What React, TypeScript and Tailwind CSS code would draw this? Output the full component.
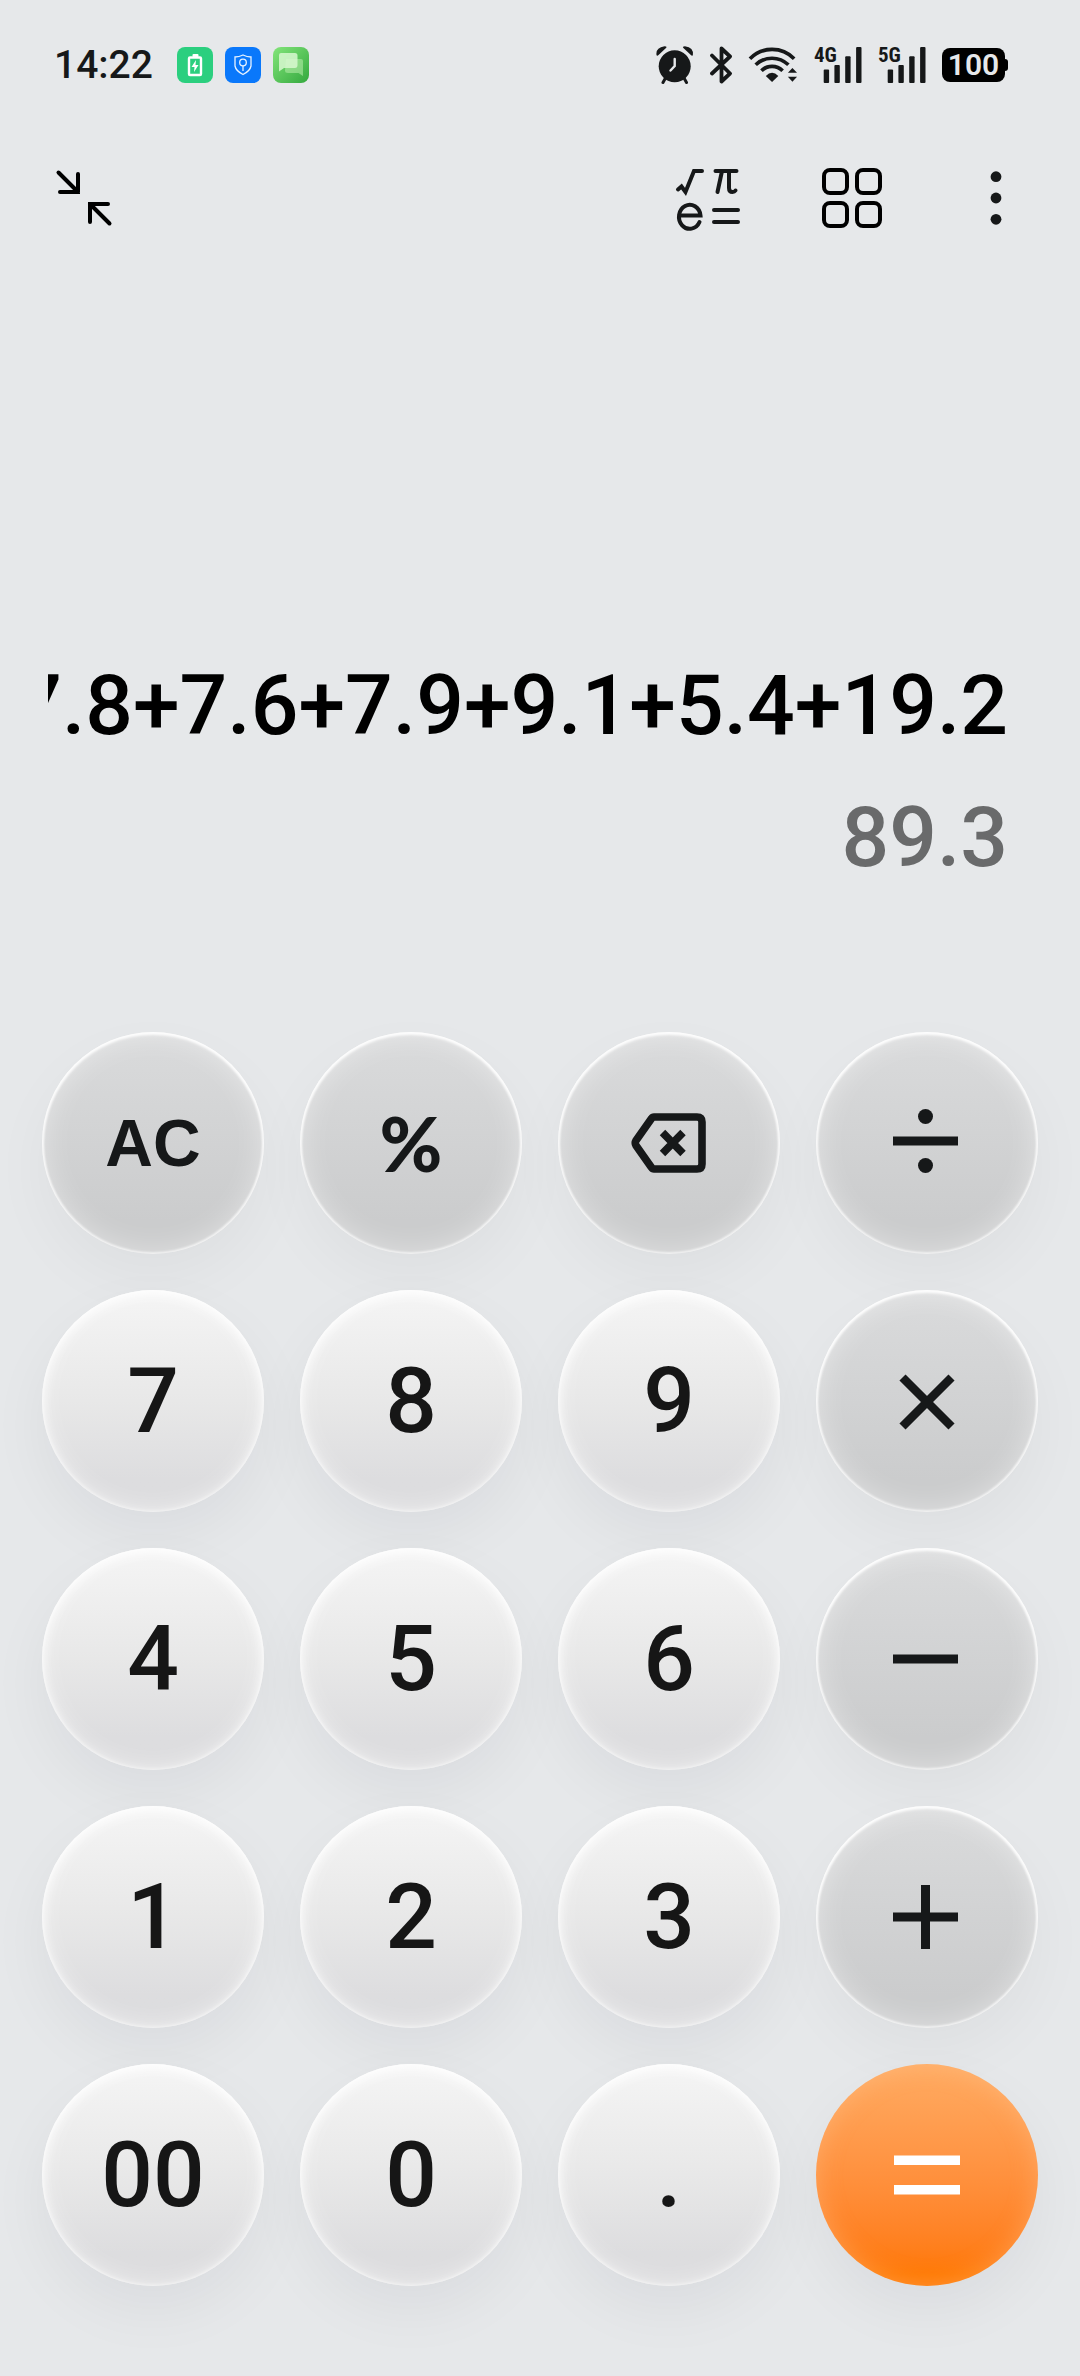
import React from 'react';

type Tone = 'digit' | 'action' | 'equals';

interface KeyDef {
    label: string;
    tone: Tone;
    content: React.ReactNode;
}

const TONES: Record<Tone, string> = {
    digit: "text-[91px] font-medium text-[#161616] bg-linear-to-b from-[#f5f5f5] via-[#e8e8e8] via-50% to-[#dddddf] to-85% shadow-[inset_0_4px_12px_rgba(255,255,255,0.9),inset_0_0_24px_rgba(255,255,255,0.5),inset_0_0_3px_1px_rgba(255,255,255,0.4),0_24px_60px_rgba(20,25,30,0.05)]",
    action: "text-[#161819] bg-linear-to-b from-[#dadbdc] to-[#cbcccd] to-85% shadow-[inset_0_2px_3px_1px_rgba(255,255,255,0.8),inset_0_0_2px_2px_rgba(255,255,255,0.6),inset_0_0_30px_rgba(255,255,255,0.45),0_24px_60px_rgba(20,25,30,0.04)]",
    equals: "text-white bg-linear-to-b from-[#ffab62] to-[#ff7800] to-95% shadow-[inset_0_0_24px_rgba(255,200,150,0.4),0_24px_60px_rgba(20,25,30,0.05)]"
};

function BackspaceIcon() {
    return (
        <svg className="w-19 h-15" viewBox="0 0 76 60" fill="none" stroke="currentColor" strokeWidth="7.6" aria-hidden="true">
            <path strokeLinejoin="round" d="M23 4H66Q71 4 71 9V51Q71 56 66 56H23Q21.500 56 20.500 54.500L5 32.500Q3.500 30 5 27.500L20.500 5.500Q21.500 4 23 4Z" />
            <path d="M31.500 19.500L52 40.500M52 19.500L31.500 40.500" />
        </svg>
    );
}

function DivideIcon() {
    return (
        <svg className="size-18" viewBox="0 0 72 72" fill="currentColor" aria-hidden="true">
            <rect x="2" y="29.5" width="65" height="9" />
            <circle cx="34.5" cy="9.5" r="7.5" />
            <circle cx="34.5" cy="58.5" r="7.5" />
        </svg>
    );
}

function MultiplyIcon() {
    return (
        <svg className="size-18" viewBox="0 0 72 72" stroke="currentColor" strokeWidth="8.6" aria-hidden="true">
            <path d="M11.500 12.500L60.500 61.500" />
            <path d="M60.500 12.500L11.500 61.500" />
        </svg>
    );
}

function MinusIcon() {
    return (
        <svg className="size-18" viewBox="0 0 72 72" fill="currentColor" aria-hidden="true">
            <rect x="2" y="31.5" width="65" height="9" />
        </svg>
    );
}

function PlusIcon() {
    return (
        <svg className="size-18" viewBox="0 0 72 72" fill="currentColor" aria-hidden="true">
            <rect x="2" y="31.5" width="65" height="9" />
            <rect x="30" y="4" width="9" height="64" />
        </svg>
    );
}

function EqualsIcon() {
    return (
        <svg className="size-18" viewBox="0 0 72 72" fill="currentColor" aria-hidden="true">
            <rect x="3" y="16.5" width="66" height="9.500" />
            <rect x="3" y="46" width="66" height="9.500" />
        </svg>
    );
}

const digit = (d: string): KeyDef => ({ label: d, tone: 'digit', content: d });

const KEYS: KeyDef[] = [
    { label: "All clear", tone: 'action', content: <span className="font-['Liberation_Sans',sans-serif] text-[66px] font-bold">AC</span> },
    { label: "Percent", tone: 'action', content: <span className="font-['Lato',sans-serif] text-[76px] font-black">%</span> },
    { label: "Backspace", tone: 'action', content: <BackspaceIcon /> },
    { label: "Divide", tone: 'action', content: <DivideIcon /> },
    digit("7"),
    digit("8"),
    digit("9"),
    { label: "Multiply", tone: 'action', content: <MultiplyIcon /> },
    digit("4"),
    digit("5"),
    digit("6"),
    { label: "Minus", tone: 'action', content: <MinusIcon /> },
    digit("1"),
    digit("2"),
    digit("3"),
    { label: "Plus", tone: 'action', content: <PlusIcon /> },
    digit("00"),
    digit("0"),
    digit("."),
    { label: "Equals", tone: 'equals', content: <EqualsIcon /> }
];

function Key({ def }: { def: KeyDef }) {
    return (
        <button
            type="button"
            aria-label={def.label}
            className={`flex aspect-square w-full items-center justify-center rounded-full leading-none ${TONES[def.tone]}`}
        >
            {def.content}
        </button>
    );
}

function AlarmIcon() {
    return (
        <svg className="w-[38px] h-[38px]" viewBox="0 0 38 38" fill="currentColor" aria-hidden="true">
            <circle cx="18.700" cy="20.200" r="16" />
            <path d="M.5 9Q-.5 1.500 8.500 .2Q11.500 .2 10 2L2.800 8.700Q1 10.500 .5 9Z" />
            <path d="M36.900 9Q37.900 1.500 28.900 .2Q25.900 .2 27.400 2L34.600 8.700Q36.400 10.500 36.900 9Z" />
            <path d="M9.500 32L7 36.500M28 32L30.500 36.500" stroke="currentColor" strokeWidth="3" strokeLinecap="round" />
            <path d="M18.700 13V20L14.500 24.500" fill="none" stroke="#e6e8ea" strokeWidth="2.4" strokeLinecap="round" />
        </svg>
    );
}

function BluetoothIcon() {
    return (
        <svg className="w-[22px] h-[38px]" viewBox="0 0 22 38" fill="none" stroke="currentColor" strokeWidth="3.8" strokeLinecap="round" strokeLinejoin="round" aria-hidden="true">
            <path d="M2 9.500L20 27.500L11.500 35.500V2.500L20 10.500L2 27.500" />
        </svg>
    );
}

function WifiIcon() {
    return (
        <svg className="w-[50px] h-[38px]" viewBox="1 0 52 38" fill="currentColor" aria-hidden="true">
            <g fill="none" stroke="currentColor" strokeWidth="3.8">
                <path d="M3 12.500A32 32 0 0 1 49 12.500" />
                <path d="M9 18.800A24.500 24.500 0 0 1 43 18.800" />
                <path d="M15 25A15.500 15.500 0 0 1 37 25" />
            </g>
            <path d="M19.500 30.500Q26 23.500 32.500 30.500L26 36.800Z" />
            <path d="M42.500 27L47.200 22L52 27Z" />
            <path d="M42.500 31.200L47.200 36.300L52 31.200Z" />
        </svg>
    );
}

function SignalIcon({ network }: { network: string }) {
    return (
        <svg className="w-[48px] h-[38px] overflow-visible" viewBox="0 0 48 38" fill="currentColor" role="img" aria-label={`${network} signal`}>
            <text x="0" y="16" fontSize="21" fontWeight="700" className="font-['Liberation_Sans_Narrow','Roboto_Condensed','Roboto',sans-serif]">{network}</text>
            <rect x="9.700" y="23.500" width="5.400" height="13.500" rx="1" />
            <rect x="20.400" y="19" width="5.400" height="18" rx="1" />
            <rect x="31.200" y="10.200" width="5.400" height="26.800" rx="1" />
            <rect x="42.100" y="1" width="5.400" height="36" rx="1" />
        </svg>
    );
}

function StatusBar() {
    return (
        <div className="flex h-[130px] items-center justify-between pr-[72px] pl-[54px] text-[#161819]">
            <div className="flex items-center gap-3">
                <time className="mr-3 text-[39px] font-medium leading-none">14:22</time>
                <svg className="size-9" viewBox="0 0 36 36" aria-hidden="true">
                    <rect width="36" height="36" rx="8" fill="#2bcf7f" />
                    <rect x="15.5" y="7" width="6" height="3" rx="1" fill="#fff" />
                    <rect x="12" y="10.500" width="12" height="17.500" rx="1" fill="none" stroke="#fff" strokeWidth="2.4" />
                    <path d="M19 13L14.500 20H17.500L17 25L21.500 18H18.500Z" fill="#fff" />
                </svg>
                <svg className="size-9" viewBox="0 0 36 36" aria-hidden="true">
                    <rect width="36" height="36" rx="8" fill="#0a78fb" />
                    <g fill="none" stroke="#e8f3ff" strokeWidth="1.3">
                        <path d="M18 8Q22 10 26 10V19Q25 24 18 27.500Q11 24 10 19V10Q14 10 18 8Z" />
                        <circle cx="18" cy="15.500" r="3.300" />
                        <path d="M18 19V24" />
                    </g>
                </svg>
                <svg className="size-9" viewBox="0 0 36 36" aria-hidden="true">
                    <defs>
                        <linearGradient id="chat-bg" x1="0" y1="0" x2="1" y2="1">
                            <stop offset="0" stopColor="#83e57a" />
                            <stop offset="1" stopColor="#33a83e" />
                        </linearGradient>
                    </defs>
                    <rect width="36" height="36" rx="8" fill="url(#chat-bg)" />
                    <path d="M13 12H28Q30 12 30 14V29L25.500 26H15Q12 26 12 23.500Z" fill="#b9efad" fillOpacity="0.55" />
                    <path d="M8 6H22Q24.500 6 24.500 8.500V18Q24.500 21 22 21H11L6 24.500V8Q6 6 8 6Z" fill="#d8f8d0" fillOpacity="0.85" />
                </svg>
            </div>
            <div className="flex items-center gap-4">
                <AlarmIcon />
                <BluetoothIcon />
                <WifiIcon />
                <SignalIcon network="4G" />
                <SignalIcon network="5G" />
                <div className="flex items-center text-black">
                    <span className="flex h-[34px] w-[63px] items-center justify-center rounded-lg bg-black text-[30px] font-semibold leading-none text-[#e6e8ea]">100</span>
                    <span className="h-3 w-[3px] rounded-r-sm bg-black" />
                </div>
            </div>
        </div>
    );
}

function Toolbar() {
    return (
        <header className="flex h-[136px] items-center justify-between px-12">
            <button type="button" aria-label="Shrink window">
                <svg className="size-18" viewBox="0 0 72 72" fill="none" stroke="#000" strokeWidth="4" strokeLinecap="round" aria-hidden="true">
                    <path d="M10.500 10.500L30 30M30 12V30H12" />
                    <path d="M61.500 61.500L42 42M42 60V42H60" />
                </svg>
            </button>
            <div className="flex items-center gap-18">
                <button type="button" aria-label="Scientific mode">
                    <svg className="size-18" viewBox="0 0 72 72" fill="none" stroke="#161819" strokeWidth="4" strokeLinecap="round" aria-hidden="true">
                        <path d="M6 27.500L9.500 24.500L13.500 30L22 9H30" />
                        <path d="M43.500 9H64.500M50 9L45.500 30M57 9V26Q57 30 60.500 30Q62.500 30 63.500 28.500" />
                        <path d="M7.500 53.500H28.500A10.800 12 0 1 0 27.500 60" />
                        <path d="M42 48H66M42 60H66" />
                    </svg>
                </button>
                <button type="button" aria-label="Unit converters">
                    <svg className="size-18" viewBox="0 0 72 72" fill="none" stroke="#000" strokeWidth="4" aria-hidden="true">
                        <rect x="8" y="8" width="23" height="23" rx="6" />
                        <rect x="41" y="8" width="23" height="23" rx="6" />
                        <rect x="8" y="41" width="23" height="23" rx="6" />
                        <rect x="41" y="41" width="23" height="23" rx="6" />
                    </svg>
                </button>
                <button type="button" aria-label="More options">
                    <svg className="size-18" viewBox="0 0 72 72" fill="#161819" aria-hidden="true">
                        <circle cx="36" cy="14.700" r="5.400" />
                        <circle cx="36" cy="36" r="5.400" />
                        <circle cx="36" cy="57.300" r="5.400" />
                    </svg>
                </button>
            </div>
        </header>
    );
}

export default function App() {
    return (
        <div className="flex min-h-screen flex-col bg-[#e6e8ea] font-['Roboto',sans-serif]">
            <StatusBar />
            <Toolbar />
            <main className="flex flex-1 flex-col">
                <section className="flex flex-1 flex-col justify-end pr-[72px] pb-32 pl-12 text-[84px] font-medium leading-[132px]">
                    {/* Long expressions run off the left edge */}
                    <div className="flex justify-end overflow-hidden whitespace-nowrap text-black">
                        <span>7.8+7.6+7.9+9.1+5.4+19.2</span>
                    </div>
                    <output className="text-right text-[#696a6b]">89.3</output>
                </section>
                <section className="grid grid-cols-4 gap-9 px-[42px] pb-[90px]">
                    {KEYS.map((k) => (
                        <Key key={k.label} def={k} />
                    ))}
                </section>
            </main>
        </div>
    );
}
